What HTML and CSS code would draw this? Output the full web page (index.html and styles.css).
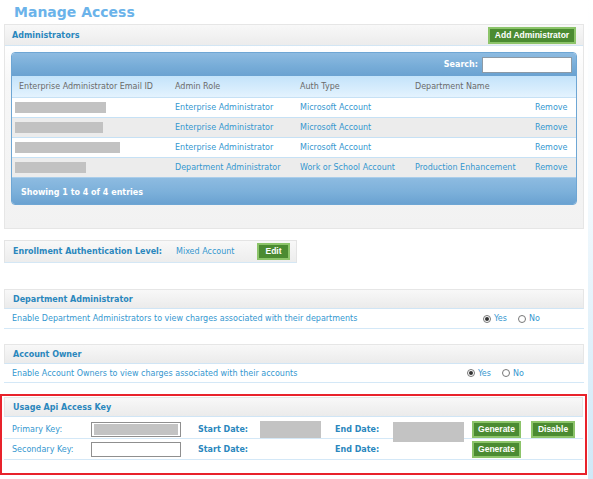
FILE: index.html
```html
<!DOCTYPE html>
<html>
<head>
<meta charset="utf-8">
<link rel="stylesheet" href="styles.css">
</head>
<body>
<div class="page">
<main class="main">
  <h1 class="title">Manage Access</h1>

  <section class="panel">
    <div class="panel-head">
      <span class="head-text">Administrators</span>
      <button class="btn btn-add">Add Administrator</button>
    </div>
    <div class="panel-body">
      <div class="grid">
        <div class="grid-top">
          <span class="search-label">Search:</span>
          <span class="search-input"></span>
        </div>
        <div class="grid-row grid-colhead">
          <span class="c1">Enterprise Administrator Email ID</span>
          <span>Admin Role</span>
          <span>Auth Type</span>
          <span>Department Name</span>
          <span></span>
        </div>
        <div class="grid-row">
          <span class="c1"><i class="redact" style="width:91px"></i></span>
          <span>Enterprise Administrator</span>
          <span>Microsoft Account</span>
          <span></span>
          <span class="rm">Remove</span>
        </div>
        <div class="grid-row alt">
          <span class="c1"><i class="redact" style="width:88px"></i></span>
          <span>Enterprise Administrator</span>
          <span>Microsoft Account</span>
          <span></span>
          <span class="rm">Remove</span>
        </div>
        <div class="grid-row">
          <span class="c1"><i class="redact" style="width:105px"></i></span>
          <span>Enterprise Administrator</span>
          <span>Microsoft Account</span>
          <span></span>
          <span class="rm">Remove</span>
        </div>
        <div class="grid-row alt">
          <span class="c1"><i class="redact" style="width:71px"></i></span>
          <span>Department Administrator</span>
          <span>Work or School Account</span>
          <span>Production Enhancement</span>
          <span class="rm">Remove</span>
        </div>
        <div class="grid-foot">Showing 1 to 4 of 4 entries</div>
      </div>
    </div>
  </section>

  <div class="enroll">
    <span class="enroll-label">Enrollment Authentication Level:</span>
    <span class="enroll-value">Mixed Account</span>
    <button class="btn btn-edit">Edit</button>
  </div>

  <section class="setting setting-dept">
    <div class="band"><span class="head-text">Department Administrator</span></div>
    <div class="setting-row">
      <span>Enable Department Administrators to view charges associated with their departments</span>
      <span class="radios">
        <span class="radio checked"></span><span class="rlabel">Yes</span>
        <span class="radio"></span><span class="rlabel">No</span>
      </span>
    </div>
  </section>

  <section class="setting setting-owner">
    <div class="band"><span class="head-text">Account Owner</span></div>
    <div class="setting-row">
      <span>Enable Account Owners to view charges associated with their accounts</span>
      <span class="radios">
        <span class="radio checked"></span><span class="rlabel">Yes</span>
        <span class="radio"></span><span class="rlabel">No</span>
      </span>
    </div>
  </section>

  <section class="api-box">
    <div class="band"><span class="head-text">Usage Api Access Key</span></div>
    <div class="api-row">
      <span>Primary Key:</span>
      <span class="key-input"><i class="key-fill"></i></span>
      <span class="bold">Start Date:</span>
      <span class="date-box date-start"></span>
      <span class="bold">End Date:</span>
      <span class="date-box date-end"></span>
      <button class="btn btn-gen">Generate</button>
      <button class="btn btn-dis">Disable</button>
    </div>
    <div class="api-row">
      <span>Secondary Key:</span>
      <span class="key-input"></span>
      <span class="bold">Start Date:</span>
      <span></span>
      <span class="bold">End Date:</span>
      <span></span>
      <button class="btn btn-gen">Generate</button>
      <span></span>
    </div>
  </section>
</main>
<div class="edge"></div>
</div>
</body>
</html>
```

FILE: styles.css
```css
* { box-sizing: border-box; }
html, body { margin: 0; padding: 0; background: #fff; }
body {
  font-family: "DejaVu Sans", Verdana, sans-serif;
  font-size: 8px;
  color: #3597cf;
  width: 593px;
  height: 479px;
  overflow: hidden;
}
.page { display: flex; height: 479px; }
.main { width: 588px; flex: none; }
.edge {
  flex: 1;
  background: linear-gradient(to bottom, #ffffff 0%, #f6fbfe 35%, #cfe8f7 100%);
}

.title {
  margin: 0;
  padding-left: 14px;
  height: 24px;
  line-height: 24px;
  font-size: 14px;
  font-weight: bold;
  color: #6bb3ea;
}

.head-text { font-weight: bold; color: #2a87bd; }
.bold { font-weight: bold; color: #2a87bd; }

.btn {
  font-family: "Liberation Sans", Arial, sans-serif;
  font-weight: bold;
  font-size: 8.5px;
  color: #fff;
  background: #4b8b32;
  border: 2px solid #8cc46a;
  padding: 0;
  height: 17px;
  line-height: 13px;
  cursor: pointer;
}

/* Administrators panel */
.panel {
  margin-left: 4px;
  width: 580px;
  border: 1px solid #e6e6e6;
}
.panel-head {
  height: 21px;
  display: flex;
  align-items: center;
  justify-content: space-between;
  padding: 0 7px 0 7px;
  background: linear-gradient(#f8f8f8, #ececec);
  border-bottom: 1px solid #d3e6f4;
}
.btn-add { width: 88px; height: 17px; }
.panel-body {
  padding: 6px 6px 23px 6px;
  background: linear-gradient(#ffffff 0%, #f7f7f7 20%, #f2f2f2 100%);
}
.grid {
  border: 1px solid #6ea6d4;
  border-radius: 4px;
  overflow: hidden;
  background: #fff;
}
.grid-top {
  height: 23px;
  display: flex;
  align-items: center;
  justify-content: flex-end;
  padding-right: 4px;
  background: linear-gradient(#8dbbe1, #78add8 55%, #6aa2d1);
}
.search-label { color: #fff; font-weight: bold; margin-right: 4px; }
.search-input {
  width: 90px;
  height: 16px;
  background: #fff;
  border: 1px solid #8c9aa6;
}
.grid-row {
  display: grid;
  grid-template-columns: 160px 125px 115px 120px 1fr;
  height: 20px;
  align-items: center;
  border-top: 1px solid #c6e1f5;
  background: #fff;
}
.grid-row.alt { background: #ececec; }
.grid-row > span { padding-left: 3px; white-space: nowrap; }
.grid-colhead {
  height: 21px;
  border-top: 0;
  color: #6a6a6a;
  background: linear-gradient(#c3e3fa, #e4f3fe);
}
.grid-colhead .c1 { padding-left: 7px; }
.redact {
  display: block;
  height: 11px;
  background: #c2c2c2;
}
.grid-row .rm { text-align: right; padding-right: 9px; }
.grid-foot {
  height: 27px;
  display: flex;
  align-items: center;
  padding-left: 9px;
  padding-top: 3px;
  color: #fff;
  font-weight: bold;
  border-top: 1px solid #a9cdea;
  background: linear-gradient(#8dbbe1, #7cb0da 55%, #6aa2d1);
}

/* Enrollment */
.enroll {
  margin: 11px 0 0 4px;
  width: 293px;
  height: 23px;
  display: flex;
  align-items: center;
  padding-left: 8px;
  border: 1px solid #e4e4e4;
  border-bottom-color: #d4e7f5;
  background: linear-gradient(#f8f8f8, #ededed);
}
.enroll-label { font-weight: bold; color: #2a87bd; width: 163px; }
.enroll-value { width: 81px; }
.btn-edit { width: 33px; height: 17px; }

/* Settings */
.setting { margin-left: 4px; width: 580px; }
.setting-dept { margin-top: 26px; }
.setting-owner { margin-top: 15px; }
.band {
  height: 20px;
  display: flex;
  align-items: center;
  padding-left: 8px;
  border: 1px solid #e6e6e6;
  border-bottom-color: #d0e5f5;
  background: linear-gradient(#f8f8f8, #ebebeb);
}
.setting-row {
  height: 20px;
  display: grid;
  align-items: center;
  padding-left: 8px;
  border-bottom: 1px solid #d4e8f7;
}
.setting-dept .setting-row { grid-template-columns: 471px auto; }
.setting-owner .setting-row { grid-template-columns: 455px auto; height: 19px; }
.radios { display: flex; align-items: center; }
.radio {
  width: 8px;
  height: 8px;
  border-radius: 50%;
  border: 1px solid #777;
  background: #fff;
  display: inline-flex;
  align-items: center;
  justify-content: center;
  margin-right: 3px;
}
.radio.checked::after {
  content: "";
  width: 4px;
  height: 4px;
  border-radius: 50%;
  background: #333;
}
.rlabel { margin-right: 11px; }

/* API box */
.api-box {
  margin-top: 11px;
  width: 587px;
  height: 81px;
  border: 2px solid #e8222b;
  padding: 1px 2px 0 2px;
}
.api-row {
  display: grid;
  grid-template-columns: 79px 107px 62px 75px 58px 79px 59px 44px;
  align-items: center;
  height: 22px;
  padding-left: 8px;
  border-bottom: 1px solid #d4e8f7;
}
.api-row + .api-row { height: 21px; }
.key-input {
  width: 90px;
  height: 15px;
  border: 1px solid #8f8f8f;
  background: #fff;
  padding: 1px 2px;
  display: block;
}
.key-fill { display: block; height: 11px; background: #c3c3c3; }
.date-box { display: block; background: #c3c3c3; }
.date-start { width: 61px; height: 17px; }
.date-end { width: 71px; height: 20px; margin-top: 5px; }
.btn-gen { width: 49px; height: 17px; }
.btn-dis { width: 44px; height: 17px; }
```
